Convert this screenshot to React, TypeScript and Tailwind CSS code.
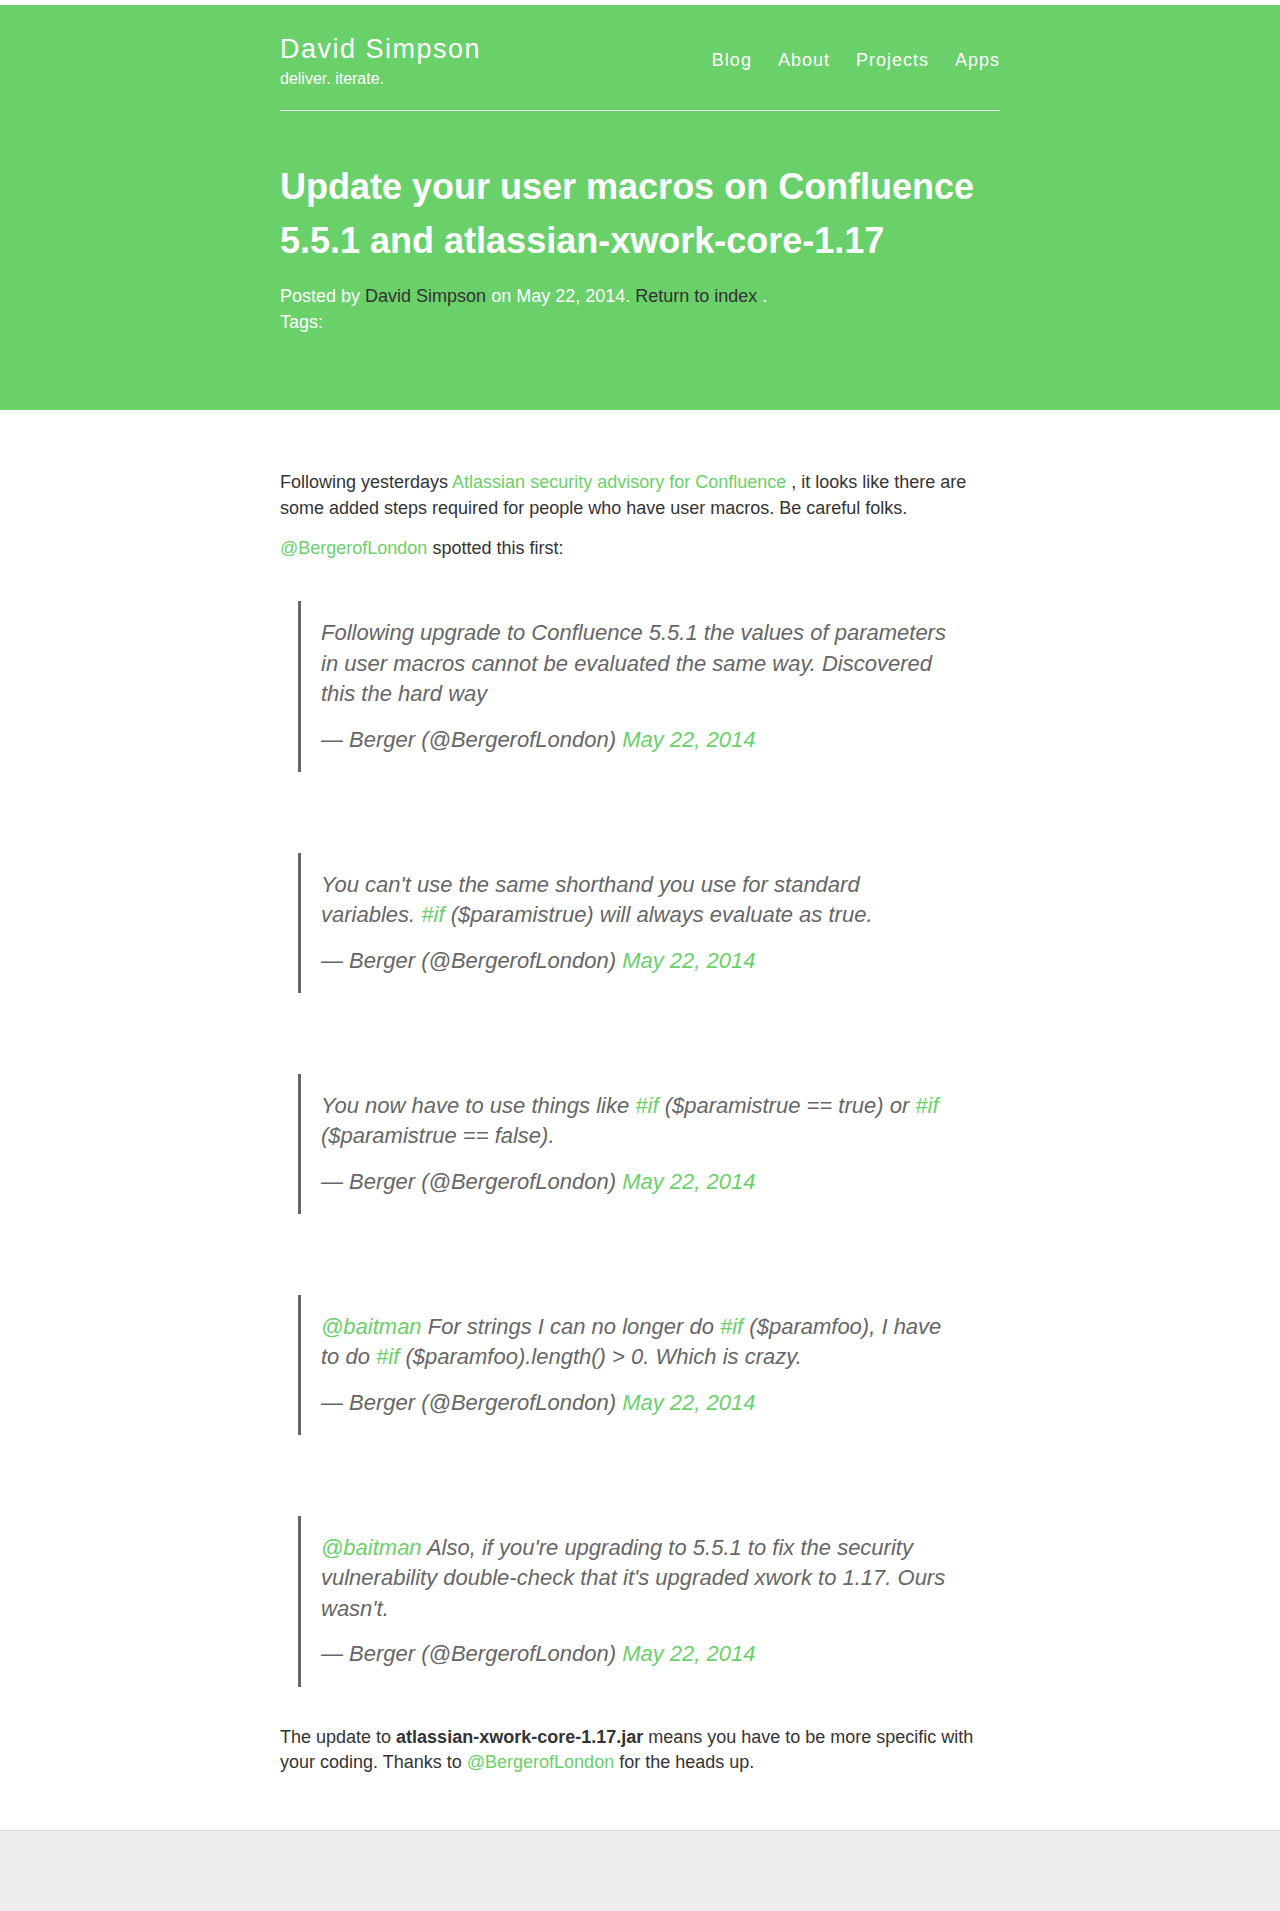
import React from 'react';

const GREEN = 'text-[#6ad06a]';

interface Tweet {
  body: React.ReactNode;
}

function Link({ children }: { children: React.ReactNode }) {
  return <a className={`${GREEN} no-underline`}>{children}</a>;
}

const tweets: Tweet[] = [
  {
    body: (
      <>
        Following upgrade to Confluence 5.5.1 the values of parameters in user macros cannot be
        evaluated the same way. Discovered this the hard way
      </>
    ),
  },
  {
    body: (
      <>
        You can't use the same shorthand you use for standard variables. <Link>#if</Link>{' '}
        ($paramistrue) will always evaluate as true.
      </>
    ),
  },
  {
    body: (
      <>
        You now have to use things like <Link>#if</Link> ($paramistrue == true) or <Link>#if</Link>{' '}
        ($paramistrue == false).
      </>
    ),
  },
  {
    body: (
      <>
        <Link>@baitman</Link> For strings I can no longer do <Link>#if</Link> ($paramfoo), I have to
        do <Link>#if</Link> ($paramfoo).length() &gt; 0. Which is crazy.
      </>
    ),
  },
  {
    body: (
      <>
        <Link>@baitman</Link> Also, if you're upgrading to 5.5.1 to fix the security vulnerability
        double-check that it's upgraded xwork to 1.17. Ours wasn't.
      </>
    ),
  },
];

function TweetQuote({ tweet, first }: { tweet: Tweet; first: boolean }) {
  return (
    <blockquote
      className={`${first ? 'mt-[39px]' : 'mt-[80.5px]'} ml-[18px] mr-[28px] border-l-[3px] border-[#666] pl-[20px] pr-[20px] pt-[17px] pb-[17px] italic text-[22px] leading-[30.5px] text-[#666]`}
    >
      <p>{tweet.body}</p>
      <p className="mt-[15px]">
        — Berger (@BergerofLondon) <Link>May 22, 2014</Link>
      </p>
    </blockquote>
  );
}

export default function App() {
  return (
    <div className="min-h-[1911px] bg-white pt-[5px] font-['Liberation_Sans',Arial,sans-serif] text-[#333]">
      {/* Header */}
      <header className="bg-[#6ad06a] text-white">
        <div className="mx-auto w-[720px] pb-[75px]">
          <div className="flex items-center justify-between border-b border-[#f4f4f4] pt-[29px] pb-[21px]">
            <div>
              <div className="text-[27px] leading-[31px] tracking-[1.5px]">David Simpson</div>
              <div className="mt-[4px] text-[16px] leading-[20px]">deliver. iterate.</div>
            </div>
            <nav className="-mt-[4px] flex gap-[26px] text-[18px] leading-[18px] tracking-[1px]">
              <a>Blog</a>
              <a>About</a>
              <a>Projects</a>
              <a>Apps</a>
            </nav>
          </div>

          <h1 className="mt-[49px] text-[36px] font-bold leading-[54px]">
            Update your user macros on Confluence 5.5.1 and atlassian-xwork-core-1.17
          </h1>
          <div className="mt-[16px] text-[18px] leading-[25.7px]">
            <p>
              Posted by <a className="text-[#333]">David Simpson</a> on May 22, 2014.{' '}
              <a className="text-[#333]">Return to index</a> .
            </p>
            <p>Tags:</p>
          </div>
        </div>
      </header>

      {/* Post body */}
      <main className="mx-auto w-[720px] pt-[60px] pb-[54px] text-[18px] leading-[25.7px]">
        <p className="mb-[14.5px]">
          Following yesterdays <Link>Atlassian security advisory for Confluence</Link> , it looks like
          there are some added steps required for people who have user macros. Be careful folks.
        </p>
        <p>
          <Link>@BergerofLondon</Link> spotted this first:
        </p>

        {tweets.map((t, i) => (
          <TweetQuote key={i} tweet={t} first={i === 0} />
        ))}

        <p className="mt-[38px]">
          The update to <strong className="font-bold">atlassian-xwork-core-1.17.jar</strong> means you
          have to be more specific with your coding. Thanks to <Link>@BergerofLondon</Link> for the
          heads up.
        </p>
      </main>

      {/* Footer */}
      <footer className="h-[84px] border-t border-b border-[#dcdcdc] bg-[#eeeeee]" />
    </div>
  );
}
